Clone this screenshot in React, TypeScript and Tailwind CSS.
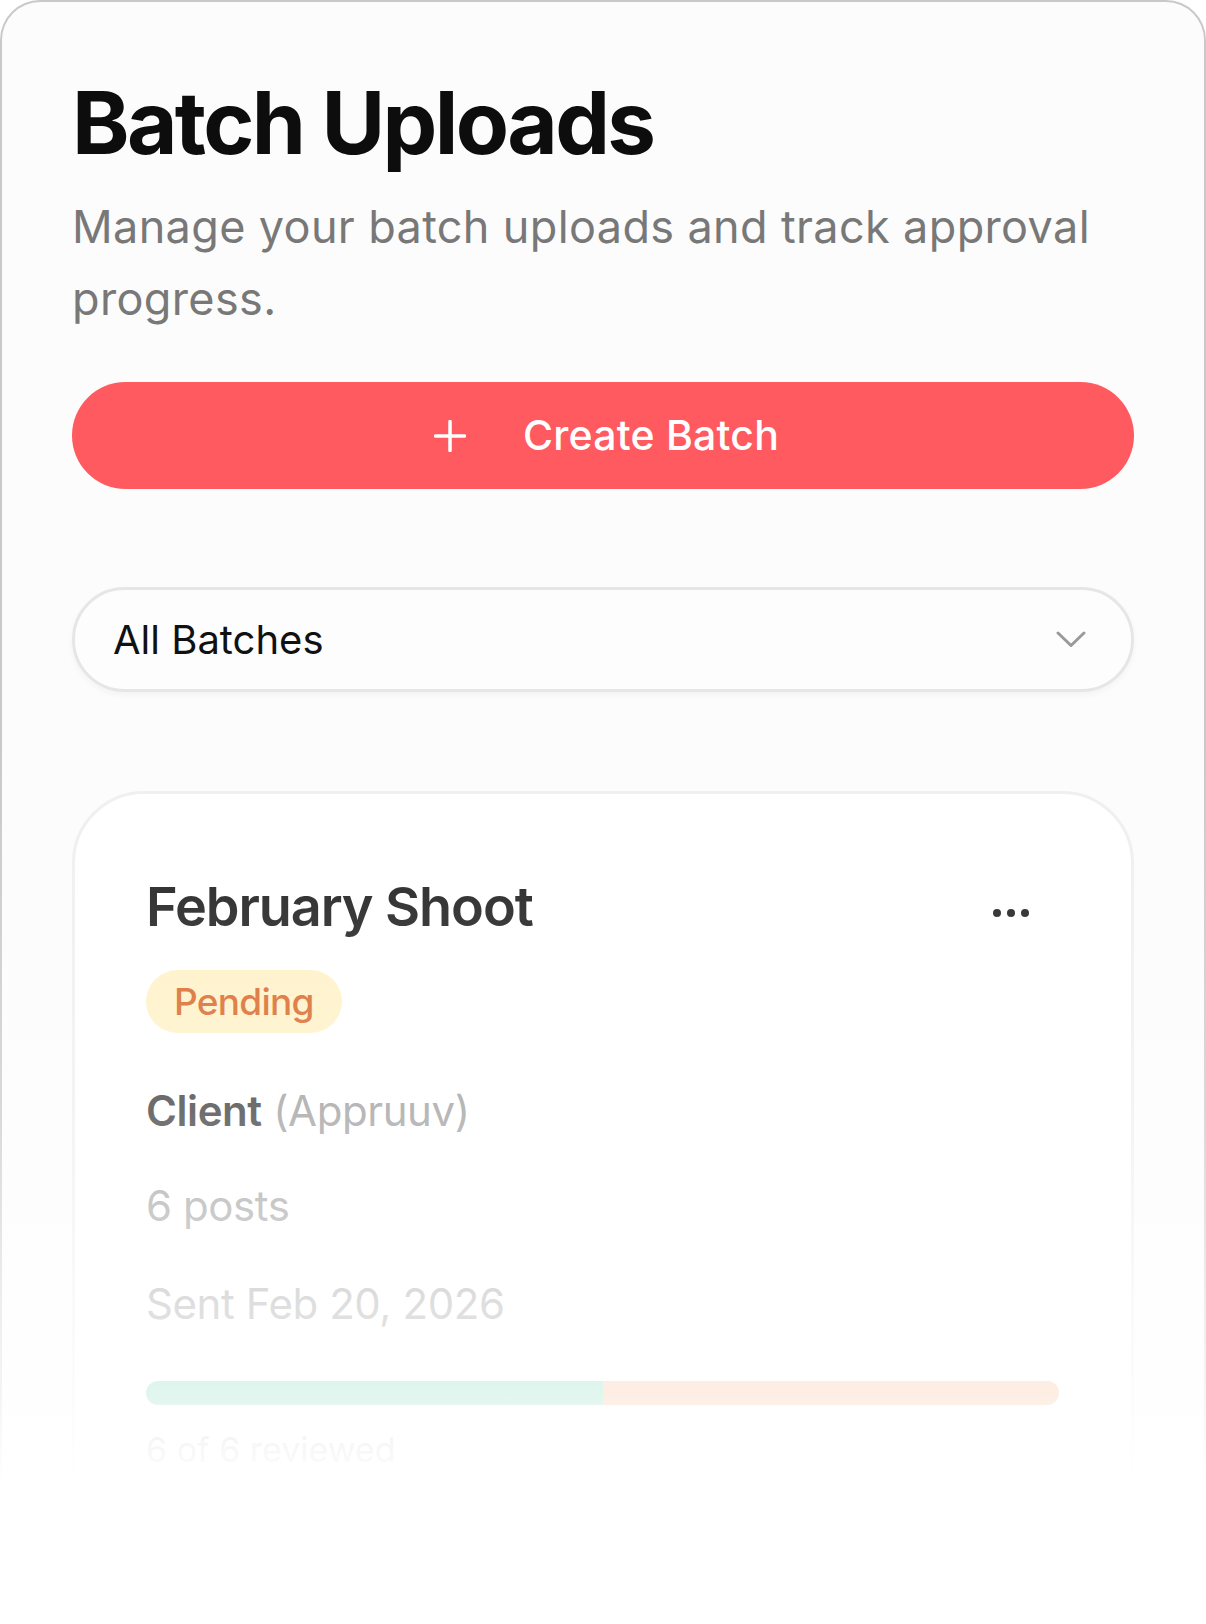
function PlusIcon() {
  return (
    <svg width="32" height="32" viewBox="0 0 32 32" fill="none" stroke="white" strokeWidth="3.5" strokeLinecap="round">
      <line x1="16" y1="1.5" x2="16" y2="30.5" />
      <line x1="1.5" y1="16" x2="30.5" y2="16" />
    </svg>
  );
}

function ChevronDown() {
  return (
    <svg width="30" height="17" viewBox="0 0 30 17" fill="none" stroke="#9a9a9a" strokeWidth="3" strokeLinecap="round" strokeLinejoin="round">
      <path d="M2 2 L15 14.5 L28 2" />
    </svg>
  );
}

export default function App() {
  return (
    <div className="relative h-[1624px] w-[1206px] overflow-hidden bg-white font-['Inter','Liberation_Sans',sans-serif]">
      {/* Page sheet */}
      <div className="h-full rounded-t-[40px] border-2 border-b-0 border-[#c9c9c9] bg-[#fcfcfc] px-[70px] pt-[77px]">
        <h1 className="text-[87px] font-bold leading-none tracking-[-0.03em] text-[#0d0d0d]">Batch Uploads</h1>
        <p className="mt-[25px] text-[45px] leading-[72px] tracking-[0.008em] text-[#787878]">
          Manage your batch uploads and track approval progress.
        </p>

        <button className="mt-[47px] flex h-[107px] w-full items-center justify-center gap-[57px] rounded-full bg-[#ff5a5f] pl-[7px] text-[41px] font-medium tracking-[0.005em] text-white">
          <PlusIcon />
          <span>Create Batch</span>
        </button>

        {/* Filter select */}
        <div className="mt-[98px] flex h-[105px] items-center justify-between rounded-full border-[3px] border-[#e6e6e6] bg-[#fdfdfd] pl-[38px] pr-[45px] shadow-[0_3px_6px_rgba(0,0,0,0.04)]">
          <span className="text-[40px] text-[#111]">All Batches</span>
          <ChevronDown />
        </div>

        {/* Batch card */}
        <div className="mt-[99px] rounded-[72px] border-[3px] border-[#efefef] bg-white px-[71px] pt-[80px] pb-[120px]">
          <div className="flex items-start justify-between">
            <h2 className="text-[54px] font-semibold leading-[65px] tracking-[-0.02em] text-[#1a1a1a]">February Shoot</h2>
            <div className="mr-[31px] mt-[35px] flex gap-[6px]">
              <span className="h-[8px] w-[8px] rounded-full bg-[#1a1a1a]" />
              <span className="h-[8px] w-[8px] rounded-full bg-[#1a1a1a]" />
              <span className="h-[8px] w-[8px] rounded-full bg-[#1a1a1a]" />
            </div>
          </div>

          <div className="mt-[31px] flex">
            <span className="flex h-[63px] items-center rounded-full bg-[#fff1c4] px-[28px] text-[37px] font-medium tracking-[-0.02em] text-[#d8601d]">
              Pending
            </span>
          </div>

          <p className="mt-[53px] text-[42px] leading-[50px] tracking-[-0.01em]">
            <span className="font-semibold text-[#333]">Client</span>{" "}
            <span className="text-[#9a9a9a]">(Appruuv)</span>
          </p>
          <p className="mt-[45px] text-[42px] leading-[50px] tracking-[-0.01em] text-[#999]">6 posts</p>
          <p className="mt-[48px] text-[42px] leading-[50px] tracking-[-0.01em] text-[#999]">Sent Feb 20, 2026</p>

          <div className="mt-[52px] flex h-[24px] w-[913px] overflow-hidden rounded-full">
            <div className="h-full w-1/2 bg-[#64d2aa]" />
            <div className="h-full w-1/2 bg-[#f5aa78]" />
          </div>
          <p className="mt-[25px] text-[34px] leading-[40px] text-[#999]">6 of 6 reviewed</p>
        </div>
      </div>

      {/* Bottom fade */}
      <div className="pointer-events-none absolute inset-0 bg-[linear-gradient(to_bottom,rgba(255,255,255,0)_740px,rgba(255,255,255,0.13)_906px,rgba(255,255,255,0.29)_1111px,rgba(255,255,255,0.47)_1205px,rgba(255,255,255,0.68)_1303px,rgba(255,255,255,0.8)_1393px,rgba(255,255,255,0.93)_1450px,rgba(255,255,255,1)_1490px)]" />
    </div>
  );
}
